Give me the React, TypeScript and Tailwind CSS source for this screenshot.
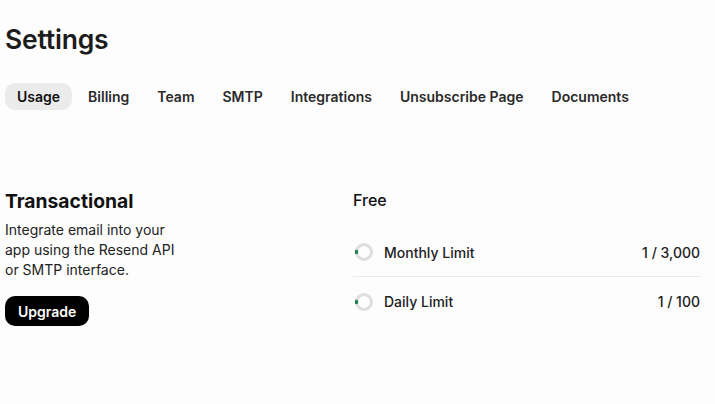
import React from "react";

function Ring() {
  return (
    <svg width="20" height="20" viewBox="0 0 20 20" className="ml-[1px] shrink-0">
      <circle cx="10" cy="10" r="7.5" fill="none" stroke="#dedede" strokeWidth="3" />
      <circle
        cx="10"
        cy="10"
        r="7.5"
        fill="none"
        stroke="#1f7a4d"
        strokeWidth="3"
        strokeDasharray="4 100"
        transform="rotate(165 10 10)"
      />
    </svg>
  );
}

export default function App() {
  const tabs = ["Usage", "Billing", "Team", "SMTP", "Integrations", "Unsubscribe Page", "Documents"];
  return (
    <div
      className="min-h-[404px] w-[715px] bg-[#fdfdfd] text-[#1c1c1c]"
      style={{ fontFamily: "Inter, 'Noto Sans', sans-serif" }}
    >
      <div className="px-[5px] pt-[22px]">
        <h1 className="text-[26.5px] font-semibold leading-[34px] tracking-[-0.2px]">Settings</h1>
        <div className="mt-[27px] flex items-center gap-[4px]">
          {tabs.map((t, i) => (
            <div
              key={t}
              className={
                "h-[27px] flex items-center whitespace-nowrap rounded-[10px] px-[12px] text-[14px] font-semibold text-[#2a2a2a] " +
                (i === 0 ? "bg-[#ebebeb] text-[#111]" : "")
              }
            >
              {t}
            </div>
          ))}
        </div>
        <div className="mt-[78px] grid grid-cols-[348px_347px]">
          <div>
            <h2 className="text-[19.3px] font-bold leading-[26px] text-[#111]">Transactional</h2>
            <p className="mt-[6px] w-[180px] text-[14px] leading-[20px] text-[#222]">
              Integrate email into your app using the Resend API or SMTP interface.
            </p>
            <button className="mt-[16px] h-[30px] rounded-[10px] bg-black px-[13px] text-[14px] font-semibold text-white">
              Upgrade
            </button>
          </div>
          <div>
            <div className="text-[16px] font-medium leading-[24px] text-[#111]">Free</div>
            <div className="mt-[16px]">
              <div className="flex h-[49px] items-center border-b border-[#e8e8e8]">
                <Ring />
                <span className="ml-[10px] text-[14px] font-medium text-[#222]">Monthly Limit</span>
                <span className="ml-auto text-[14px] font-medium text-[#222]">1 / 3,000</span>
              </div>
              <div className="flex h-[49px] items-center">
                <Ring />
                <span className="ml-[10px] text-[14px] font-medium text-[#222]">Daily Limit</span>
                <span className="ml-auto text-[14px] font-medium text-[#222]">1 / 100</span>
              </div>
            </div>
          </div>
        </div>
      </div>
    </div>
  );
}
